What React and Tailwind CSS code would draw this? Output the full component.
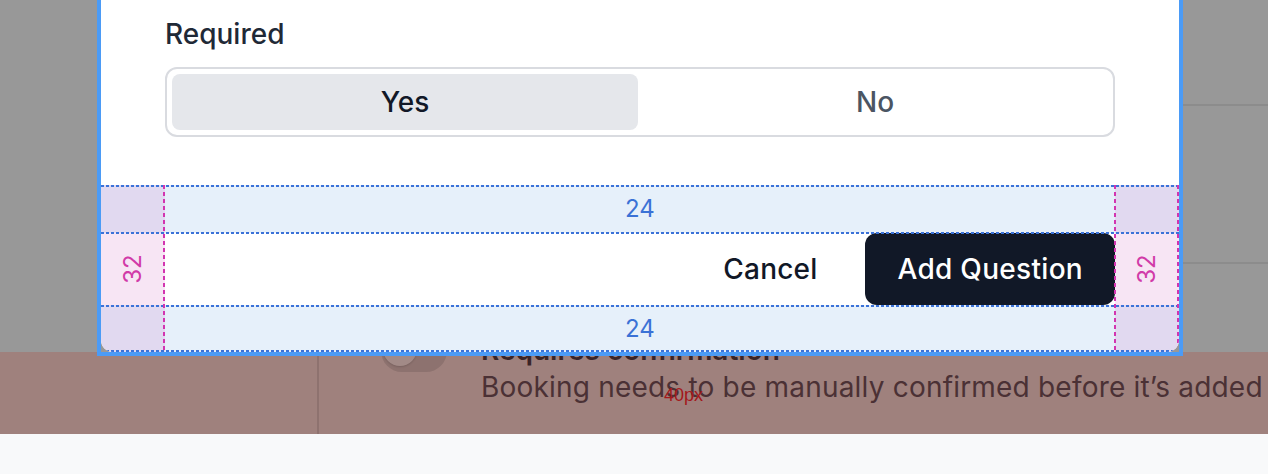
import React from "react";

function HLine({ className }) {
  return (
    <div
      className={
        "pointer-events-none absolute left-0 right-0 h-[2px] bg-[image:repeating-linear-gradient(90deg,#3b72d8_0_3px,transparent_3px_5px)] " +
        className
      }
    />
  );
}

function VLine({ className }) {
  return (
    <div
      className={
        "pointer-events-none absolute top-0 bottom-0 w-[2px] bg-[image:repeating-linear-gradient(180deg,#d235b0_0_4px,transparent_4px_7px)] " +
        className
      }
    />
  );
}

function Footer() {
  return (
    <div className="relative grid grid-cols-[64px_1fr_64px] grid-rows-[48px_72px_47px]">
      <div className="bg-[#e1d9f0]" />
      <div className="flex items-center justify-center bg-[#e6f0fa] text-[24px] leading-none text-[#3b72d6]">24</div>
      <div className="bg-[#e1d9f0]" />

      <div className="flex items-center justify-center bg-[#f7e5f4]">
        <span className="-rotate-90 text-[24px] leading-none text-[#d13aa8]">32</span>
      </div>
      <div className="flex items-stretch justify-end gap-4 bg-white">
        <button className="rounded-[12px] px-8 text-[28px] font-medium tracking-[0.2px] text-[#111827]">Cancel</button>
        <button className="rounded-[12px] bg-[#111827] px-8 text-[28px] font-medium tracking-[0.3px] text-white">Add Question</button>
      </div>
      <div className="flex items-center justify-center bg-[#f7e5f4]">
        <span className="-rotate-90 text-[24px] leading-none text-[#d13aa8]">32</span>
      </div>

      <div className="bg-[#e1d9f0]" />
      <div className="flex items-center justify-center bg-[#e6f0fa] text-[24px] leading-none text-[#3b72d6]">24</div>
      <div className="bg-[#e1d9f0]" />

      <HLine className="top-0" />
      <HLine className="top-[47px]" />
      <HLine className="top-[120px]" />
      <HLine className="bottom-0" />
      <VLine className="left-[62px]" />
      <VLine className="right-[63px]" />
      <VLine className="right-0" />
    </div>
  );
}

export default function App() {
  return (
    <div className="relative h-[474px] w-[1268px] overflow-hidden font-['Inter',sans-serif]">
      {/* page behind the dialog, dimmed */}
      <div className="flex h-[352px] bg-[#989898]">
        <div className="w-[319px] shrink-0 border-r-2 border-[#8c8c8c]" />
        <div className="flex flex-1 flex-col">
          <div className="h-[106px] border-b-2 border-[#8c8c8c]" />
          <div className="h-[158px] border-b-2 border-[#8c8c8c]" />
        </div>
      </div>

      {/* spacing highlight band */}
      <div className="flex h-[82px] bg-[#9f817d]">
        <div className="w-[319px] shrink-0 border-r-2 border-[#8e726f]" />
        <div className="flex flex-1 items-start gap-[34px] pl-[62px]">
          <div className="relative mt-[-22px] h-[42px] w-[66px] shrink-0 rounded-full bg-[#8d726f]">
            <div className="absolute left-[2px] top-[2px] h-[34px] w-[34px] rounded-full bg-[#a28a87] shadow-[0_1px_2px_rgba(0,0,0,0.15)]" />
          </div>
          <div className="mt-[-20px] whitespace-nowrap">
            <div className="text-[28px] font-semibold leading-[36px] text-[#3a2427]">Requires confirmation</div>
            <div className="text-[28px] leading-[38px] tracking-[0.2px] text-[#4b3135]">
              Booking needs to be manually confirmed before it’s added to your calendar.
            </div>
          </div>
        </div>
      </div>

      <div className="h-[40px] bg-[#f8f9fa]" />

      <div className="absolute left-[664px] top-[386px] font-['Liberation_Sans',sans-serif] text-[18px] leading-none text-[#a3181b]">40px</div>

      {/* dialog */}
      <div className="absolute bottom-[118px] left-[97px] z-10 w-[1086px] border-4 border-[#4b9bf6]">
        <div className="overflow-hidden rounded-b-[12px] bg-white">
          <div className="px-16 pb-12 pt-[60px]">
            <div className="text-[28px] font-medium leading-[40px] text-[#1f2937]">Required</div>
            <div className="mt-[13px] flex h-[70px] gap-1 rounded-[12px] border-2 border-[#d9dbe0] p-[5px]">
              <div className="flex flex-1 items-center justify-center rounded-[8px] bg-[#e5e7eb] text-[28px] font-medium text-[#111827]">
                Yes
              </div>
              <div className="flex flex-1 items-center justify-center rounded-[8px] text-[28px] font-medium text-[#4b5563]">
                No
              </div>
            </div>
          </div>
          <Footer />
        </div>
      </div>
    </div>
  );
}
